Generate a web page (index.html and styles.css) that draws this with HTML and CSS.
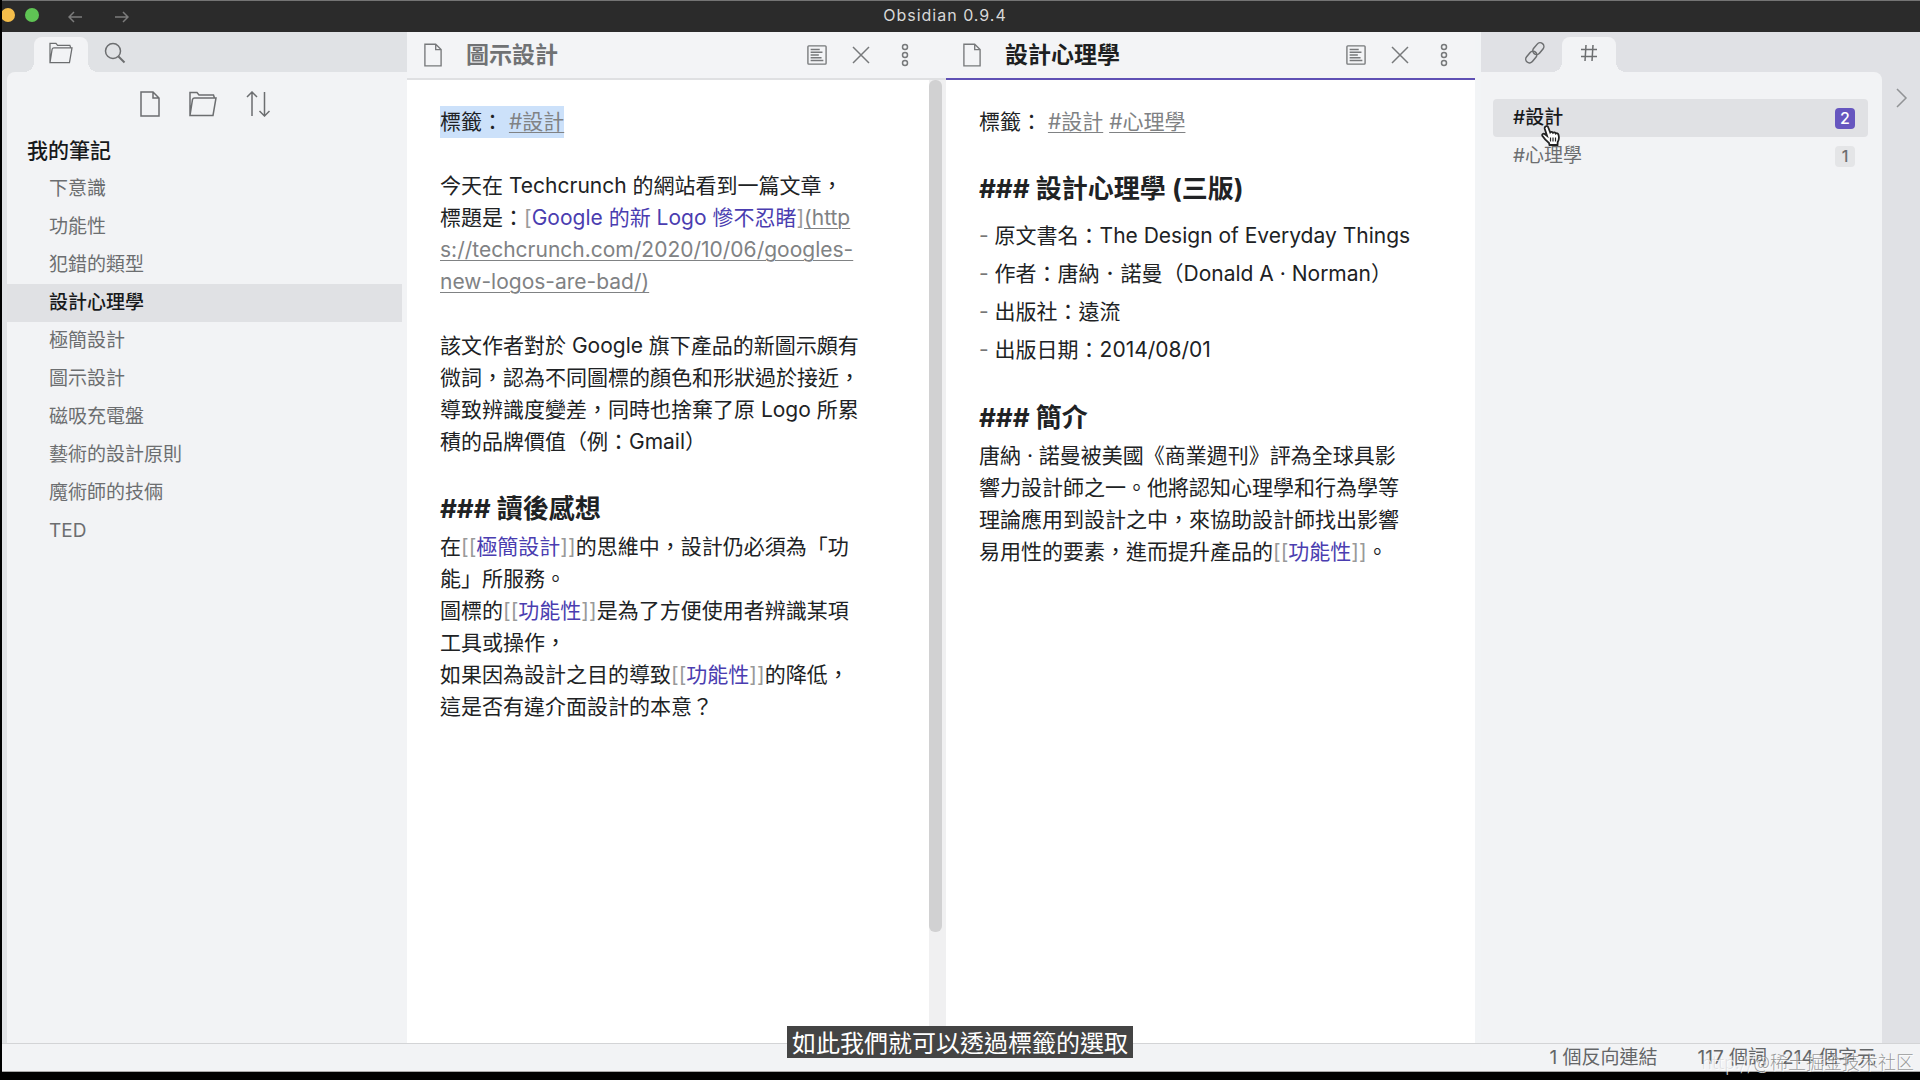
FILE: index.html
```html
<!DOCTYPE html>
<html lang="zh-Hant">
<head>
<meta charset="utf-8">
<title>Obsidian 0.9.4</title>
<link rel="stylesheet" href="styles.css">
</head>
<body>
<svg class="defs" aria-hidden="true">
  <symbol id="i-file" viewBox="0 0 20 26"><path d="M1 1h12l6 6v18H1zM13 1v6h6"/></symbol>
  <symbol id="i-folder" viewBox="0 0 28 26"><path d="M1 24.500V1.500h7l2 2.500h14.500l1 3M1 24.500L3.500 8.500Q4 7 5.500 7H27l-3 17.500z"/></symbol>
  <symbol id="i-search" viewBox="0 0 22 22"><circle cx="9" cy="9" r="7.500"/><path d="M14.500 14.500l6 6" stroke-width="2"/></symbol>
  <symbol id="i-sort" viewBox="0 0 24 26"><path d="M6 25V1M1 6l5-5 5 5M18.500 1v24M13.500 20l5 5 5-5"/></symbol>
  <symbol id="i-doc" viewBox="0 0 22 22"><rect x="1" y="1" width="20" height="20" rx="1"/><path d="M4 5h10M4 8h13M4 11h9M4 14h12M4 17h14"/></symbol>
  <symbol id="i-close" viewBox="0 0 18 18"><path d="M1 1l16 16M17 1L1 17"/></symbol>
  <symbol id="i-more" viewBox="0 0 8 24"><circle cx="4" cy="4" r="2.500"/><circle cx="4" cy="12" r="2.500"/><circle cx="4" cy="20" r="2.500"/></symbol>
  <symbol id="i-link" viewBox="0 0 20 22"><g transform="rotate(-50 10 11)"><rect x="-2" y="7" width="13" height="7.500" rx="3.750"/><rect x="9" y="7" width="13" height="7.500" rx="3.750"/></g></symbol>
  <symbol id="i-hash" viewBox="0 0 18 18"><path d="M6 1L5 17M13 1l-1 16M1 5.500h16M1 12.500h16"/></symbol>
  <symbol id="i-back" viewBox="0 0 14 12"><path d="M14 6H1M6 1L1 6l5 5"/></symbol>
  <symbol id="i-forward" viewBox="0 0 14 12"><path d="M0 6h13M8 1l5 5-5 5"/></symbol>
  <symbol id="i-chevron" viewBox="0 0 12 20"><path d="M1 1l9 9-9 9"/></symbol>
</svg>
<div class="app">
  <header class="titlebar">
    <span class="light light-yellow"></span>
    <span class="light light-green"></span>
    <button class="nav" aria-label="Back"><svg width="14" height="12"><use href="#i-back"/></svg></button>
    <button class="nav" aria-label="Forward"><svg width="14" height="12"><use href="#i-forward"/></svg></button>
    <h1 class="app-title">Obsidian 0.9.4</h1>
  </header>
  <div class="main">
    <aside class="side side-left">
      <div class="tabs">
        <button class="tab active" aria-label="Files"><svg width="24" height="22"><use href="#i-folder"/></svg></button>
        <button class="tab" aria-label="Search"><svg width="22" height="22"><use href="#i-search"/></svg></button>
      </div>
      <div class="panel">
        <div class="tools">
          <button aria-label="New note"><svg width="20" height="26"><use href="#i-file"/></svg></button>
          <button aria-label="New folder"><svg width="28" height="26"><use href="#i-folder"/></svg></button>
          <button aria-label="Sort order"><svg width="24" height="26"><use href="#i-sort"/></svg></button>
        </div>
        <h2 class="vault">我的筆記</h2>
        <ul class="files">
          <li><a href="#">下意識</a></li>
          <li><a href="#">功能性</a></li>
          <li><a href="#">犯錯的類型</a></li>
          <li><a href="#" class="current">設計心理學</a></li>
          <li><a href="#">極簡設計</a></li>
          <li><a href="#">圖示設計</a></li>
          <li><a href="#">磁吸充電盤</a></li>
          <li><a href="#">藝術的設計原則</a></li>
          <li><a href="#">魔術師的技倆</a></li>
          <li><a href="#">TED</a></li>
        </ul>
      </div>
    </aside>
    <section class="pane pane-scroll">
      <header class="pane-head">
        <svg width="18" height="24"><use href="#i-file"/></svg>
        <h2>圖示設計</h2>
        <button aria-label="Preview"><svg width="20" height="20"><use href="#i-doc"/></svg></button>
        <button aria-label="Close"><svg width="18" height="18"><use href="#i-close"/></svg></button>
        <button class="more" aria-label="More options"><svg width="8" height="24"><use href="#i-more"/></svg></button>
      </header>
      <div class="pane-body">
        <article class="note">
          <p><span class="selected">標籤： <a class="tag" href="#">#設計</a></span></p>
          <p>今天在 Techcrunch 的網站看到一篇文章，<br>標題是：<span class="mark">[</span><a class="link" href="#">Google 的新 Logo 慘不忍睹</a><span class="mark">]</span><a class="tag" href="#">(http<br>s://techcrunch.com/2020/10/06/googles-<br>new-logos-are-bad/)</a></p>
          <p>該文作者對於 Google 旗下產品的新圖示頗有<br>微詞，認為不同圖標的顏色和形狀過於接近，<br>導致辨識度變差，同時也捨棄了原 Logo 所累<br>積的品牌價值（例：Gmail）</p>
          <h3>### 讀後感想</h3>
          <p>在<span class="mark">[[</span><a class="link" href="#">極簡設計</a><span class="mark">]]</span>的思維中，設計仍必須為「功<br>能」所服務。<br>圖標的<span class="mark">[[</span><a class="link" href="#">功能性</a><span class="mark">]]</span>是為了方便使用者辨識某項<br>工具或操作，<br>如果因為設計之目的導致<span class="mark">[[</span><a class="link" href="#">功能性</a><span class="mark">]]</span>的降低，<br>這是否有違介面設計的本意？</p>
        </article>
        <div class="scrollbar"><div class="thumb"></div></div>
      </div>
    </section>
    <section class="pane pane-active">
      <header class="pane-head">
        <svg width="18" height="24"><use href="#i-file"/></svg>
        <h2>設計心理學</h2>
        <button aria-label="Preview"><svg width="20" height="20"><use href="#i-doc"/></svg></button>
        <button aria-label="Close"><svg width="18" height="18"><use href="#i-close"/></svg></button>
        <button class="more" aria-label="More options"><svg width="8" height="24"><use href="#i-more"/></svg></button>
      </header>
      <div class="pane-body">
        <article class="note">
          <p>標籤： <a class="tag" href="#">#設計</a> <a class="tag" href="#">#心理學</a></p>
          <h3>### 設計心理學 (三版)</h3>
          <ul>
            <li>原文書名：The Design of Everyday Things</li>
            <li>作者：唐納．諾曼（Donald A · Norman）</li>
            <li>出版社：遠流</li>
            <li>出版日期：2014/08/01</li>
          </ul>
          <h3>### 簡介</h3>
          <p>唐納 · 諾曼被美國《商業週刊》評為全球具影<br>響力設計師之一。他將認知心理學和行為學等<br>理論應用到設計之中，來協助設計師找出影響<br>易用性的要素，進而提升產品的<span class="mark">[[</span><a class="link" href="#">功能性</a><span class="mark">]]</span>。</p>
        </article>
      </div>
    </section>
    <aside class="side side-right">
      <div class="tabs">
        <button class="tab" aria-label="Backlinks"><svg width="20" height="22"><use href="#i-link"/></svg></button>
        <button class="tab active" aria-label="Tags"><svg width="18" height="18"><use href="#i-hash"/></svg></button>
      </div>
      <div class="panel">
        <ul class="tags">
          <li><a href="#" class="current">#設計<span class="count">2</span></a></li>
          <li><a href="#">#心理學<span class="count">1</span></a></li>
        </ul>
        <svg class="cursor" width="20" height="22" viewBox="0 0 20 22"><path d="M4.500 1.500C6 .5 7 1.500 7.500 3l1.700 4.500c.8-1 2.300-.8 2.800.3.800-.8 2.200-.5 2.700.7.900-.7 2.400-.2 2.800 1.200.8 3 .8 4.800-.8 7.300l-.2 3H8.500L8 18c-2-1.500-4.500-4-6.500-7C.5 9 2.500 8 4 9.200l2 1.500L3.800 4c-.3-1 0-2 .7-2.500z" fill="#fff" stroke="#222" stroke-width="1.800"/><path d="M9.500 12.500v4M12 12.500v4M14.500 12.500v4" stroke="#222" stroke-width="1.200"/></svg>
      </div>
    </aside>
    <div class="ribbon"><button aria-label="Collapse"><svg width="12" height="20"><use href="#i-chevron"/></svg></button></div>
  </div>
  <footer class="status">
    <span>1 個反向連結</span>
    <span class="words">117 個詞</span>
    <span>214 個字元</span>
  </footer>
  <div class="watermark"><span class="faint">http://</span>@稀土掘金技术社区</div>
  <div class="caption">如此我們就可以透過標籤的選取</div>
</div>
</body>
</html>
```
FILE: styles.css
```css
* { box-sizing: border-box; margin: 0; padding: 0; }
body {
  background: #000;
  color: #202224;
  font: 21px/32px Inter, "Noto Sans CJK TC", sans-serif;
}
ul { list-style: none; }
a { color: inherit; text-decoration: none; }
button { border: 0; background: none; color: inherit; font: inherit; display: flex; align-items: center; justify-content: center; }
svg { display: block; flex: none; fill: none; stroke: currentColor; stroke-width: 1.500; }
.defs { position: absolute; width: 0; height: 0; }

.app {
  position: relative;
  display: flex;
  flex-direction: column;
  height: 100vh;
  border-left: 2px solid #000;
  border-bottom: 8px solid #000;
  background: #f2f3f5;
}

.titlebar {
  display: flex;
  height: 32px;
  padding-bottom: 3px;
  border-top: 1px solid #747474;
  background: #2b2b2b;
  color: #7c7c7c;
  align-items: center;
  overflow: hidden;
}
.light { width: 14px; height: 14px; border-radius: 50%; flex: none; }
.light-yellow { margin-left: -1px; background: #f4bd4a; }
.light-green { margin-left: 10px; background: #5fc454; }
.nav { width: 47px; height: 24px; padding-top: 4px; }
.light-green + .nav { margin-left: 12px; }
.app-title {
  position: absolute;
  left: 0;
  right: 32px;
  color: #d8d8d8;
  font-size: 16px;
  font-weight: 400;
  letter-spacing: 1px;
  line-height: 28px;
  text-align: center;
}

.main { flex: 1; display: flex; min-height: 0; }

.side { display: flex; flex-direction: column; background: #e0e2e5; color: #6c6e70; flex: none; }
.side-left { width: 405px; padding-left: 5px; }
.side-right { width: 401px; background: #e0e1e5; }
.tabs { display: flex; height: 40px; padding: 5px 0 0 27px; }
.tab { position: relative; width: 54px; height: 35px; padding-bottom: 3px; border-radius: 8px 8px 0 0; }
.tab.active { background: #f2f3f5; }
.tab.active::before, .tab.active::after {
  content: "";
  position: absolute;
  bottom: 0;
  width: 10px;
  height: 10px;
}
.tab.active::before { right: 100%; background: radial-gradient(circle at 0 0, transparent 10px, #f2f3f5 10px); }
.tab.active::after { left: 100%; background: radial-gradient(circle at 100% 0, transparent 10px, #f2f3f5 10px); }
.panel { position: relative; flex: 1; background: #f2f3f5; }
.side-left .panel { border-radius: 8px 0 0 0; }
.side-right .panel { border-radius: 0 8px 0 0; }

.tools { display: flex; justify-content: center; gap: 29px; height: 60px; padding-top: 19px; padding-right: 4px; }
.tools button { height: 26px; }
.vault { padding: 3px 20px; color: #17191b; font-size: 21px; font-weight: 500; line-height: 32px; }
.files { margin-right: 5px; }
.files a { display: block; padding-left: 42px; font-size: 19px; line-height: 38px; }
.files .current { background: #e0e1e4; color: #17191b; font-weight: 500; }

.pane { flex: 1 1 0; display: flex; flex-direction: column; min-width: 0; border-right: 6px solid #f2f4f6; background: #fff; }
.pane-scroll { flex-basis: 10px; border-right: 0; }
.pane-head { display: flex; align-items: center; height: 48px; padding: 0 27px 0 17px; border-bottom: 2px solid #dfe0e2; background: #f3f4f6; color: #77797b; }
.pane-scroll .pane-head { padding-right: 37px; }
.pane-head h2 { flex: 1; padding-left: 24px; color: #707274; font-size: 23px; font-weight: 700; white-space: nowrap; }
.pane-head button { height: 24px; margin-left: 25px; }
.pane-head .more { margin-left: 31px; }
.pane-active .pane-head { border-color: #5f50b4; }
.pane-active .pane-head h2 { color: #1d1f21; }
.pane-body { flex: 1; display: flex; min-height: 0; }
.note { flex: 1; padding: 26px 0 32px 33px; white-space: nowrap; }
.note p { margin-bottom: 32px; }
.note h3 { margin-bottom: 3px; font-size: 26px; font-weight: 700; line-height: 38px; }
.note ul { margin: 9px 0 30px; }
.note li { line-height: 38px; }
.note li::before { content: "- "; color: #777; }
.tag { color: #808284; text-decoration: underline; text-underline-offset: 3px; text-decoration-thickness: 1px; }
.link { color: #4a3db0; }
.mark { color: #999; }
.selected { display: inline-block; background: #cce1fa; }
.scrollbar { width: 17px; padding-right: 4px; background: #f0f0f1; }
.thumb { height: 88.5%; border-radius: 6px; background: #d1d1d2; }

.tags { padding: 27px 14px 0 12px; }
.tags a { display: flex; align-items: center; height: 38px; padding: 0 13px 0 20px; border-radius: 4px; font-size: 19px; }
.tags .current { background: #e0e1e4; color: #17191b; font-weight: 500; }
.count { width: 20px; height: 21px; margin-left: auto; border-radius: 4px; background: #e4e5e7; font-size: 16px; font-weight: 500; line-height: 21px; text-align: center; }
.current .count { background: #6656bf; color: #fff; }
.cursor { position: absolute; left: 60px; top: 53px; }
.ribbon { width: 38px; padding: 56px 0 0 14px; background: #e0e1e5; color: #919395; }

.status { display: flex; justify-content: flex-end; gap: 15px; height: 29px; padding-right: 44px; border-top: 1px solid #d3d4d6; border-bottom: 1px solid #a8a8a8; color: #646668; font-size: 19px; line-height: 28px; }
.words { margin-left: 25px; }
.watermark { position: absolute; right: 6px; bottom: -2px; color: rgba(110, 110, 110, .7); font: 300 18px/26px "Noto Sans CJK SC", sans-serif; text-shadow: 1px 1px 0 rgba(255, 255, 255, .8); }
.faint { color: rgba(160, 160, 160, .25); }
.caption { position: absolute; left: 785px; bottom: 14px; padding: 0 5px; background: #444; color: #fff; font: 24px/32px "Noto Sans CJK TC", sans-serif; }
```
